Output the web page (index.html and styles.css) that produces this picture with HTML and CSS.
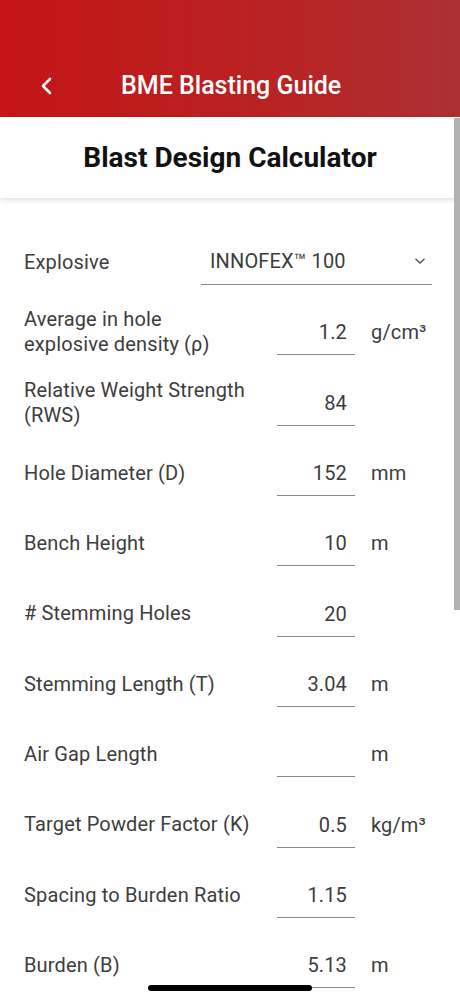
FILE: index.html
```html
<!DOCTYPE html>
<html lang="en">
<head>
    <meta charset="UTF-8">
    <meta name="viewport" content="width=device-width, initial-scale=1.0">
    <title>Blast Design Calculator</title>
    <link rel="stylesheet" href="styles.css">
</head>
<body>

    <header class="app-bar">
        <button class="back-btn" aria-label="Back">
            <svg width="14" height="18" viewBox="0 0 14 18">
                <path d="M10 2 L3 9 L10 16" fill="none" stroke="#fff" stroke-width="2.6" stroke-linecap="round" stroke-linejoin="round"/>
            </svg>
        </button>
        <div class="app-title">BME Blasting Guide</div>
    </header>

    <div class="page-card">
        <h1>Blast Design Calculator</h1>
    </div>

    <main class="form">
        <div class="row">
            <div class="label label-short">Explosive</div>
            <div class="select">
                <span>INNOFEX&trade; 100</span>
                <svg width="12" height="8" viewBox="0 0 12 8">
                    <path d="M1.5 1.8 L6 6 L10.5 1.8" fill="none" stroke="#555" stroke-width="1.4"/>
                </svg>
            </div>
        </div>

        <div class="row">
            <div class="label">Average in hole explosive density (&rho;)</div>
            <div class="field">1.2</div>
            <div class="unit">g/cm&sup3;</div>
        </div>

        <div class="row">
            <div class="label">Relative Weight Strength (RWS)</div>
            <div class="field">84</div>
            <div class="unit"></div>
        </div>

        <div class="row">
            <div class="label">Hole Diameter (D)</div>
            <div class="field">152</div>
            <div class="unit">mm</div>
        </div>

        <div class="row">
            <div class="label">Bench Height</div>
            <div class="field">10</div>
            <div class="unit">m</div>
        </div>

        <div class="row">
            <div class="label"># Stemming Holes</div>
            <div class="field">20</div>
            <div class="unit"></div>
        </div>

        <div class="row">
            <div class="label">Stemming Length (T)</div>
            <div class="field">3.04</div>
            <div class="unit">m</div>
        </div>

        <div class="row">
            <div class="label">Air Gap Length</div>
            <div class="field"></div>
            <div class="unit">m</div>
        </div>

        <div class="row">
            <div class="label">Target Powder Factor (K)</div>
            <div class="field">0.5</div>
            <div class="unit">kg/m&sup3;</div>
        </div>

        <div class="row">
            <div class="label">Spacing to Burden Ratio</div>
            <div class="field">1.15</div>
            <div class="unit"></div>
        </div>

        <div class="row">
            <div class="label">Burden (B)</div>
            <div class="field">5.13</div>
            <div class="unit">m</div>
        </div>
    </main>

    <!-- overlay bits: scroll thumb and gesture bar -->
    <div class="scroll-thumb"></div>
    <div class="home-bar"></div>

</body>
</html>
```

FILE: styles.css
```css
body {
    margin: 0;
    font-family: Roboto, "Noto Sans", sans-serif;
    background-color: #fff;
    color: #3d3d3d;
    height: 1000px;
    overflow: hidden;
}

.app-bar {
    height: 117px;
    background: linear-gradient(90deg, #c41517 0%, #b92323 60%, #ad3034 100%);
    display: flex;
    align-items: flex-end;
    padding-bottom: 14px;
    box-sizing: border-box;
}

.back-btn {
    width: 94px;
    height: 34px;
    padding: 0 0 0 40px;
    border: none;
    background: none;
    display: flex;
    align-items: center;
}

.app-title {
    color: #fff;
    font-size: 25px;
    font-weight: 500;
    margin-left: 27px;
    line-height: 34px;
}

.page-card {
    height: 81px;
    background-color: #fff;
    box-shadow: 0 2px 5px rgba(0, 0, 0, 0.12);
    display: flex;
    align-items: center;
    justify-content: center;
    position: relative;
}

h1 {
    margin: 0;
    font-size: 28px;
    font-weight: 700;
    color: #111;
}

.form {
    padding: 41px 0 0 24px;
    display: flex;
    flex-direction: column;
    gap: 24.35px;
}

.row {
    height: 46px;
    display: flex;
    align-items: center;
    font-size: 20px;
    letter-spacing: 0.15px;
}

.label {
    width: 227px;
    flex: 0 0 227px;
    line-height: 25px;
}

.label-short {
    width: 177px;
    flex: 0 0 177px;
}

.select {
    width: 231px;
    height: 46px;
    box-sizing: border-box;
    border-bottom: 1px solid #8a8a8a;
    display: flex;
    align-items: center;
    justify-content: space-between;
    padding: 0 6px 2px 9px;
}

.field {
    width: 78px;
    height: 46px;
    margin-left: 26px;
    box-sizing: border-box;
    border-bottom: 1px solid #8a8a8a;
    text-align: right;
    padding-right: 8px;
    line-height: 46px;
}

.unit {
    margin-left: 16px;
}

.scroll-thumb {
    position: absolute;
    left: 454px;
    top: 118px;
    width: 6px;
    height: 492px;
    background-color: #b2b2b2;
}

.home-bar {
    position: absolute;
    left: 148px;
    top: 985px;
    width: 164px;
    height: 6px;
    border-radius: 3px;
    background-color: #000;
}
```
